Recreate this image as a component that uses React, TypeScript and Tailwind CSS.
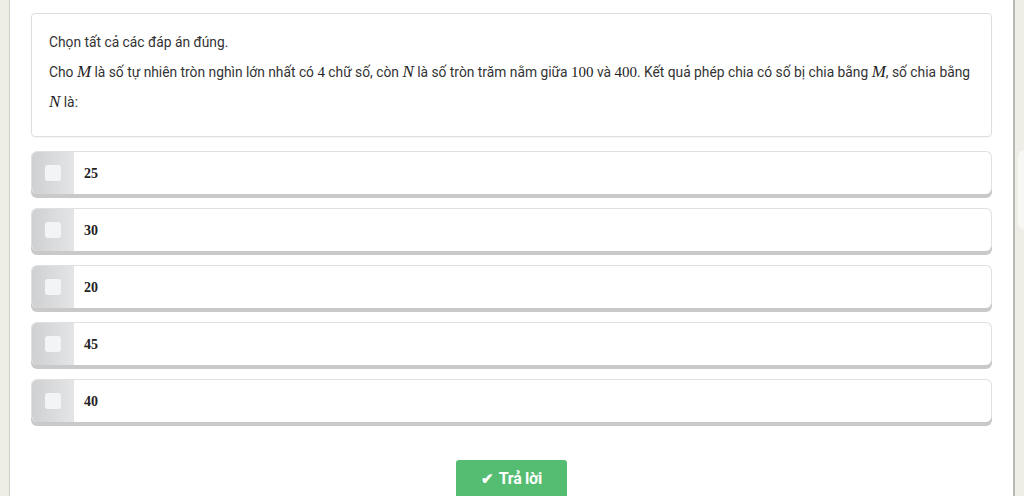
import React from "react";

const M = ({ c }: { c: string }) => (
  <span className="italic text-[17px] text-[#222]" style={{ fontFamily: '"Liberation Serif", "DejaVu Serif", serif' }}>
    {c}
  </span>
);
const Num = ({ c }: { c: string }) => (
  <span className="text-[15px] text-[#222]" style={{ fontFamily: '"Liberation Serif", "DejaVu Serif", serif' }}>
    {c}
  </span>
);

const options = ["25", "30", "20", "45", "40"];

export default function App() {
  return (
    <div className="w-[1024px] h-[496px] bg-[#efeee6] flex overflow-hidden" style={{ fontFamily: 'Roboto, "Noto Sans", sans-serif' }}>
      <div className="w-[10px] shrink-0 border-r border-[#cfcfc8]" />
      <div className="flex-1 bg-white border-r-2 border-[#b9b9b3] px-[21px] pt-[13px] flex flex-col">
        <div className="border border-[#dedede] rounded-[4px] pl-[17px] pr-[18px] pt-[18px] pb-[19px] text-[13.8px] text-[#333] shadow-[0_1px_2px_rgba(0,0,0,0.04)]">
          <p className="leading-[20px] mb-[5px]">Chọn tất cả các đáp án đúng.</p>
          <p className="leading-[29px]">
            Cho <M c="M" /> là số tự nhiên tròn nghìn lớn nhất có <Num c="4" /> chữ số, còn <M c="N" /> là số tròn trăm nằm giữa <Num c="100" /> và <Num c="400" />. Kết quả phép chia có số bị chia bằng <M c="M" />, số chia bằng <M c="N" /> là:
          </p>
        </div>
        <div className="mt-[14px] flex flex-col gap-[14px]">
          {options.map((o) => (
            <div key={o} className="flex h-[43px] rounded-[6px] border border-[#e0e0e0] border-b-0 overflow-hidden bg-white shadow-[0_4px_0_#c9c9c9]">
              <div className="w-[42px] shrink-0 flex items-center justify-center bg-gradient-to-r from-[#cfd0d2] to-[#e4e5e7] shadow-[0_4px_0_#9c9c9c]">
                <div className="w-[16px] h-[16px] rounded-[3px] bg-[#f2f4f6]" />
              </div>
              <div className="flex items-center pl-[10px]">
                <span className="text-[14px] font-bold text-[#222]" style={{ fontFamily: '"Liberation Serif", "DejaVu Serif", serif' }}>
                  {o}
                </span>
              </div>
            </div>
          ))}
        </div>
        <div className="flex justify-center mt-[38px]">
          <button className="w-[111px] h-[38px] rounded-[3px] bg-[#55bd72] text-white font-bold text-[16px] flex items-center justify-center gap-[5px] tracking-[-0.3px]">
            <span className="text-[15px]">✔</span>
            <span>Trả lời</span>
          </button>
        </div>
      </div>
      <div className="w-[9px] shrink-0 relative">
        <div className="absolute left-[3px] top-[150px] w-[14px] h-[80px] rounded-full bg-[#f7f7f3]" />
      </div>
    </div>
  );
}
